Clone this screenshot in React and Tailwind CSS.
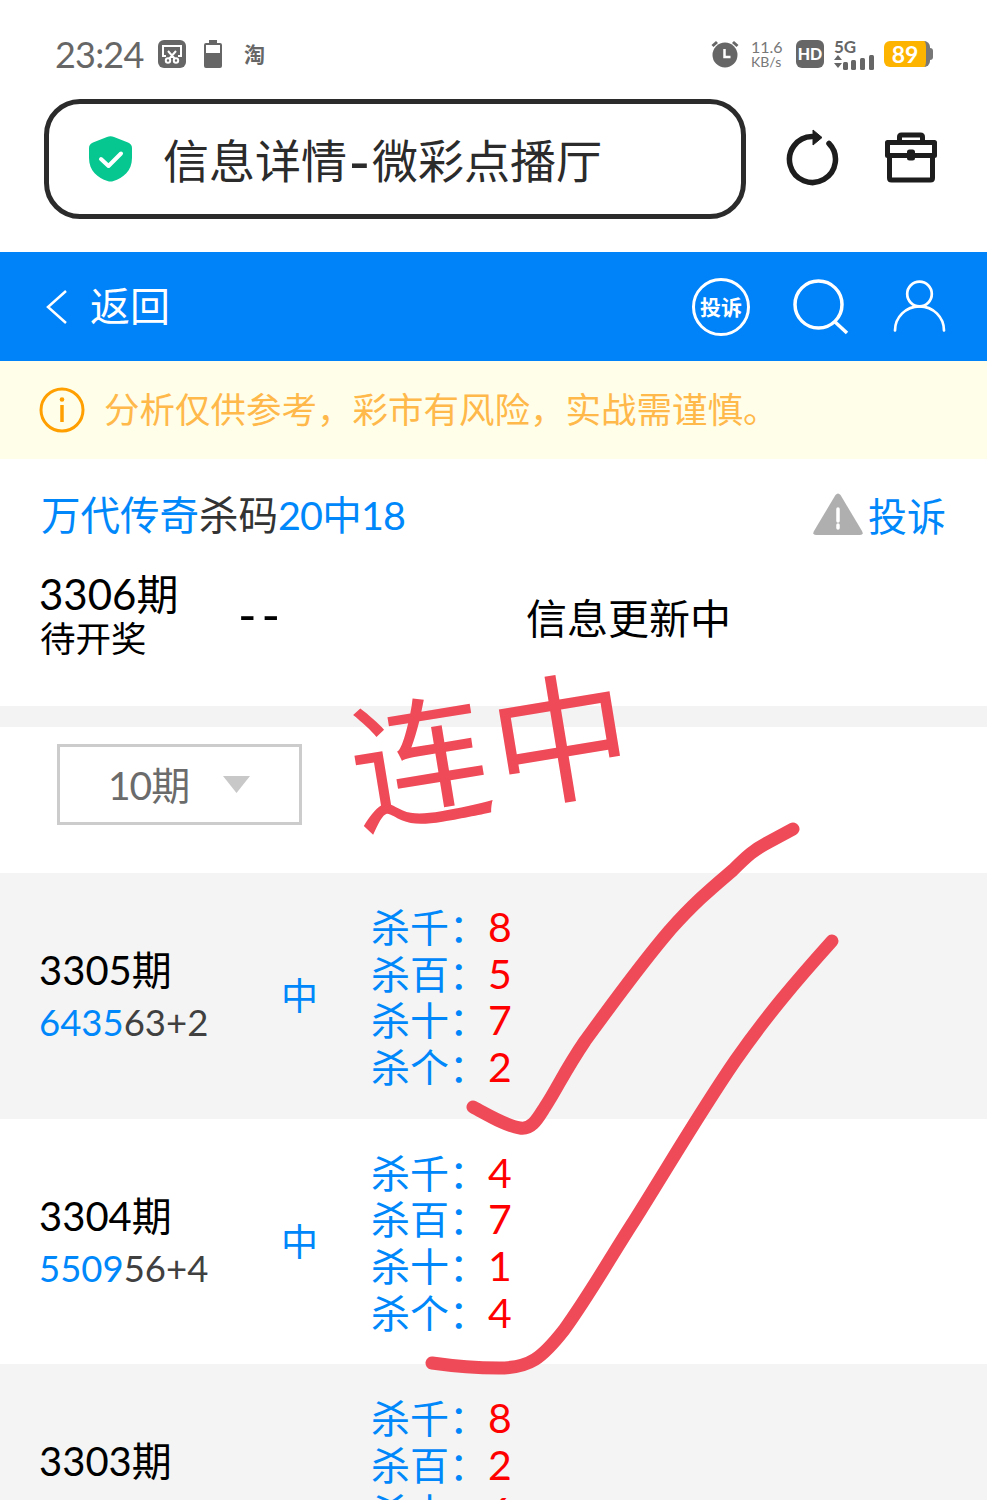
const RECORDS = [
  { issue: '3305期', hit: '6435', rest: '63+2', result: '中', kills: ['8', '5', '7', '2'] },
  { issue: '3304期', hit: '5509', rest: '56+4', result: '中', kills: ['4', '7', '1', '4'] },
  { issue: '3303期', hit: '', rest: '', result: '', kills: ['8', '2', '6'] },
];

const POSITIONS = ['杀千：', '杀百：', '杀十：', '杀个：'];

function StatusBar() {
  return (
    <div className="flex h-[99px] items-start justify-between pl-[55px] pr-[54px] pt-[38px] text-[#666]">
      <div className="flex h-8 items-center">
        <span className="w-[103px] text-[36px] leading-8 tracking-[-0.8px]">23:24</span>
        <svg width="28" height="28" viewBox="0 0 28 28" fill="none" stroke="#fff" strokeWidth="2">
          <rect width="28" height="28" rx="6" fill="#666" stroke="none" />
          <path d="M8 16H5V6h18v10h-3M10 11l7 8M18 11l-7 8" />
          <circle cx="10" cy="20.5" r="2.2" />
          <circle cx="18" cy="20.5" r="2.2" />
        </svg>
        <svg className="ml-[17px]" width="20" height="28" viewBox="0 0 20 28">
          <path d="M6 0h8v3h3a2 2 0 0 1 2 2v21a2 2 0 0 1-2 2H3a2 2 0 0 1-2-2V5a2 2 0 0 1 2-2h3z" fill="#666" />
          <path d="M3 5h14v8H3z" fill="#fff" />
        </svg>
        <span className="ml-[21px] text-[21px] font-bold leading-7">淘</span>
      </div>
      <div className="flex h-8 items-center">
        <svg width="28" height="28" viewBox="0 0 28 28" fill="none">
          <circle cx="14" cy="15" r="12.5" fill="#666" />
          <path d="M1.5 6 6 2M26.5 6 22 2" stroke="#666" strokeWidth="3" />
          <path d="M13.5 9v8h6" stroke="#fff" strokeWidth="2.5" />
        </svg>
        <div className="ml-3 w-[45px] text-[16px] leading-[16px] text-[#777]">
          <div>11.6</div>
          <div className="text-[14px] leading-[14px]">KB/s</div>
        </div>
        <span className="flex h-[28px] w-[28px] items-center justify-center rounded-md bg-[#666] text-[16px] font-black leading-5 text-white">HD</span>
        <div className="ml-[10px] h-8 w-[41px]">
          <div className="h-[17px] pt-px text-[17px] font-bold leading-[16px]">5G</div>
          <svg width="41" height="15" viewBox="0 0 41 15" fill="#666">
            <path d="M0 5 4 0l4 5zM0 8h8l-4 5z" />
            <rect x="9" y="7" width="5" height="8" rx="1.5" />
            <rect x="17" y="5" width="5" height="10" rx="1.5" />
            <rect x="26" y="3" width="5" height="12" rx="1.5" />
            <rect x="35" y="0" width="5" height="15" rx="1.5" />
          </svg>
        </div>
        <div className="ml-[9px] flex items-center">
          <span className="flex h-[26px] w-[46px] items-center justify-center rounded-md border-r-4 border-[#777] bg-[#fdb400] text-[23px] font-bold leading-6 text-white">89</span>
          <span className="h-3 w-[3px] rounded-r bg-[#777]" />
        </div>
      </div>
    </div>
  );
}

function AddressBar() {
  return (
    <div className="flex h-[153px] items-start pl-[44px]">
      <div className="flex h-[120px] w-[702px] items-center rounded-[36px] border-[5px] border-[#2b2b2b] pl-[40px]">
        <svg width="43" height="46" viewBox="0 0 43 46" fill="none">
          <path d="M18 1Q21.5 -.4 25 1L39 6.5Q43 8 43 12V22C43 35 34 42 24.5 45Q21.5 46 18.5 45C9 42 0 35 0 22V12Q0 8 4 6.5Z" fill="#06c790" />
          <path d="m12 23 7.5 7L32 17.5" stroke="#fff" strokeWidth="4" strokeLinecap="round" strokeLinejoin="round" />
        </svg>
        <div className="ml-[31px] flex items-center whitespace-nowrap pt-[3px] text-[46px] leading-[56px] text-[#2b2b2b]">
          <span>信息详情</span>
          <span className="w-[25px] text-center text-[60px]">-</span>
          <span>微彩点播厅</span>
        </div>
      </div>
      <svg className="ml-[39px] mt-[28px]" width="54" height="60" viewBox="0 0 54 60" fill="none">
        <path d="M27 9.5A23 23 0 1 0 44 16.5" stroke="#1d1d1d" strokeWidth="5.5" strokeLinecap="round" />
        <path d="m28 3 9 7.5-9 7.5z" fill="#1d1d1d" stroke="#1d1d1d" strokeLinejoin="round" />
      </svg>
      <svg className="ml-[45px] mt-[33px]" width="54" height="52" viewBox="0 0 54 52" fill="none" stroke="#1d1d1d" strokeWidth="5" strokeLinejoin="round" strokeLinecap="round">
        <path d="M15.5 10V5q0-2 2-2h19q2 0 2 2v5M3.5 10.500h47v13h-47zM5.500 25v21q0 2 2 2h39q2 0 2-2V25" />
        <rect x="24.500" y="19" width="5" height="8" rx="1" fill="#1d1d1d" strokeWidth="3" />
      </svg>
    </div>
  );
}

function NavBar() {
  return (
    <div className="flex h-[109px] items-center bg-[#0082f9] pl-[45px] text-white">
      <svg width="23" height="36" viewBox="0 0 23 36" fill="none" stroke="#fff" strokeWidth="2.5">
        <path d="M21 2 3 18l18 16" />
      </svg>
      <span className="ml-[22px] pb-[2px] text-[40px] leading-[50px]">返回</span>
      <div className="ml-auto flex h-[58px] w-[58px] items-center justify-center rounded-full border-[3px] border-white text-[21px] font-bold leading-6">
        投诉
      </div>
      <svg className="ml-[43px]" width="56" height="56" viewBox="0 0 56 56" fill="none" stroke="#fff" strokeWidth="3.5">
        <circle cx="25.5" cy="25.5" r="23.5" />
        <path d="m41 42 13 12" />
      </svg>
      <svg className="ml-[44px] mr-[41px]" width="53" height="54" viewBox="0 0 53 54" fill="none" stroke="#fff" strokeWidth="2.7" strokeLinecap="round">
        <circle cx="26.5" cy="14" r="12.3" />
        <path d="M2 50.500A24.500 24.200 0 0 1 51 50.500" />
      </svg>
    </div>
  );
}

function Record({ record, shaded }) {
  return (
    <div className={`flex h-[245.7px] shrink-0 items-center ${shaded ? 'bg-[#f4f4f4]' : 'bg-white'}`}>
      <div className="w-[281px] pl-[39px]">
        <div className="text-[40px] leading-[52px] text-black">{record.issue}</div>
        <div className="h-[52px] text-[36.5px] leading-[52px] text-[#404040]">
          <span className="text-[#0088fb]">{record.hit}</span>
          {record.rest}
        </div>
      </div>
      <div className="w-[90px] text-[37px] leading-[52px] text-[#0088fb]">{record.result}</div>
      <div className="pt-[3px] text-[39px] leading-[46.7px] text-[#0088fb]">
        {POSITIONS.map((position, i) => (
          <div key={position} className="flex h-[46.7px]">
            <span>{position}</span>
            <span className="text-[41px] text-[#f00]">{record.kills[i]}</span>
          </div>
        ))}
      </div>
    </div>
  );
}

export default function App() {
  return (
    <div className="relative h-[1500px] w-[987px] overflow-hidden bg-white font-['Lato','Noto_Sans_CJK_SC',sans-serif]">
      <StatusBar />
      <AddressBar />
      <NavBar />

      {/* Notice */}
      <div className="flex h-[98px] items-center bg-[#fffee9] pl-[39px]">
        <svg width="46" height="46" viewBox="0 0 46 46" fill="none" stroke="#ff9f00" strokeWidth="3">
          <circle cx="23" cy="23" r="21" />
          <path d="M23 18v17" strokeWidth="3.5" />
          <circle cx="23" cy="12.5" r="2.3" fill="#ff9f00" stroke="none" />
        </svg>
        <span className="ml-[19px] whitespace-nowrap text-[35.5px] leading-[48px] text-[#ffb84a]">
          分析仅供参考，彩市有风险，实战需谨慎。
        </span>
      </div>

      {/* Title */}
      <div className="flex h-[109px] items-center justify-between pl-[41px] pr-[41px] text-[39.5px] leading-[52px] text-[#0088fb]">
        <div className="pt-[3px]">
          万代传奇<span className="text-[#333]">杀码</span>
          <span className="tracking-[-0.8px]">20中18</span>
        </div>
        <div className="flex items-center text-[39px]">
          <svg className="mr-[5px]" width="50" height="42" viewBox="0 0 50 42">
            <path d="M22.5 2q2.5-3 5 0l21.5 36q2 4-2 4H3q-4 0-2-4z" fill="#afafaf" />
            <path d="M25 16v12M25 32v3" stroke="#fff" strokeWidth="3.5" strokeLinecap="round" />
          </svg>
          <span className="pt-[5px]">投诉</span>
        </div>
      </div>

      {/* Current issue */}
      <div className="flex h-[138px] items-start pl-[39px] text-black">
        <div className="w-[199px]">
          <div className="h-[50px] text-[42px] leading-[52px]">3306期</div>
          <div className="pl-px text-[35.5px] leading-[42px]">待开奖</div>
        </div>
        <div className="w-[288px] pt-[18px] text-[50px] leading-[56px] tracking-[5px]">--</div>
        <div className="pt-[23px] text-[41px] leading-[56px]">信息更新中</div>
      </div>

      <div className="h-[21px] bg-[#f3f3f3]" />

      {/* Issue count select */}
      <div className="h-[146px] pl-[57px] pt-[17px]">
        <div className="flex h-[81px] w-[245px] items-center border-[3px] border-[#ccc] pl-[48px] text-[39px] leading-[52px] text-[#6b6b6b]">
          <span className="tracking-[-1px]">10期</span>
          <svg className="ml-[34px]" width="27" height="17" viewBox="0 0 27 17">
            <path d="M0 0h27L13.5 17z" fill="#c8c8c8" />
          </svg>
        </div>
      </div>

      {RECORDS.map((record, i) => (
        <Record key={record.issue} record={record} shaded={i % 2 === 0} />
      ))}

      {/* Handwritten marks over the page */}
      <div className="absolute left-[349px] top-[680px] -rotate-[9.3deg] whitespace-nowrap text-[139px] leading-[140px] tracking-[4px] text-[#ef4a58]">
        连中
      </div>
      <svg className="pointer-events-none absolute left-0 top-0" width="987" height="1500" fill="none" stroke="#ef4a58" strokeWidth="13" strokeLinecap="round" strokeLinejoin="round">
        <path d="M473 1107C490 1116 506 1126 520 1128C532 1130 538 1118 545 1107C558 1087 564 1072 585 1041C612 1004 640 965 670 930C696 901 712 888 733 870C748 855 754 850 767 843L793 829" />
        <path d="M432 1363C460 1367 480 1368 499 1368C530 1368 542 1358 564 1330C590 1294 610 1258 634 1221C668 1167 700 1112 735 1061C767 1015 797 980 832 941" />
      </svg>
    </div>
  );
}
